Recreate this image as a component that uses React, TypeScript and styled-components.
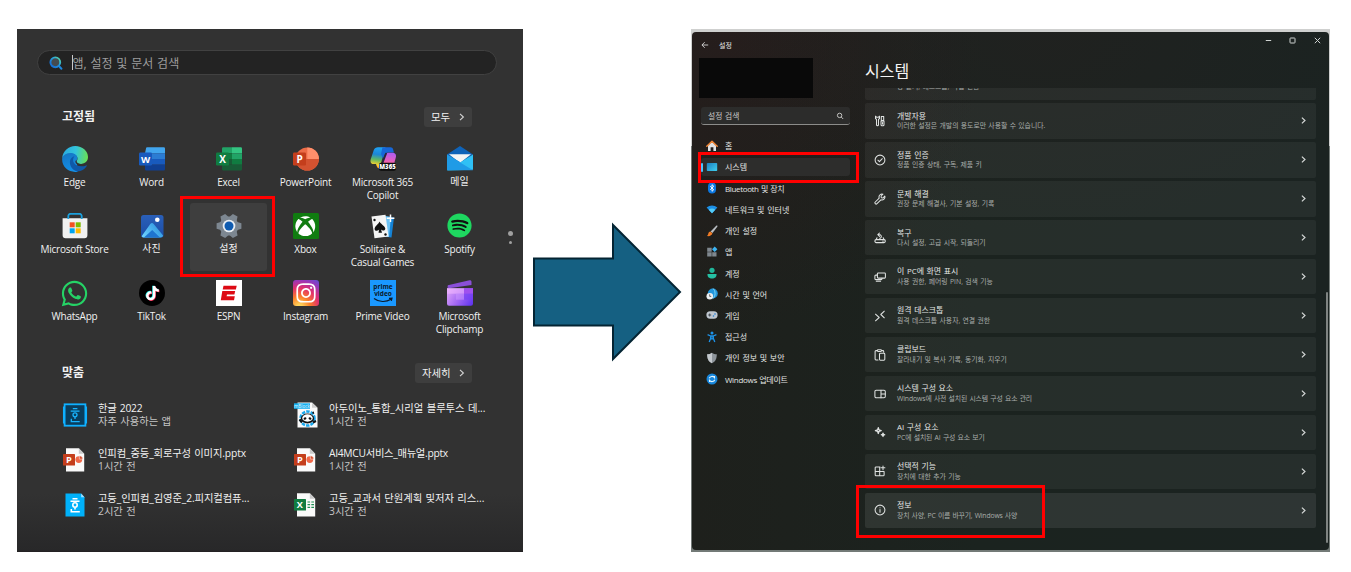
import React from "react";
import styled, { createGlobalStyle, css } from "styled-components";
import { FaWhatsapp, FaXbox, FaTiktok, FaInstagram, FaSpotify } from "react-icons/fa6";

const GlobalStyle = createGlobalStyle`
  * { box-sizing: border-box; }
  body { margin: 0; background: #fff; }
`;

const Page = styled.div`
  width: 1351px;
  height: 572px;
  padding: 29px 0 0 17px;
  display: flex;
  align-items: flex-start;
  overflow: hidden;
  background: #fff;
  font-family: "Open Sans", "Noto Sans CJK KR", sans-serif;
  white-space: nowrap;
`;

const RedFrame = styled.div<{ $inset: string }>`
  position: absolute;
  inset: ${(p) => p.$inset};
  border: 3px solid #ff0000;
  pointer-events: none;
  z-index: 2;
`;

/* ---------- start menu ---------- */

const StartMenu = styled.section`
  width: 506px;
  height: 523px;
  padding: 21px 20px 0;
  background: linear-gradient(#323232 0, #323232 465px, #282829 521px, #221f21 523px);
  color: #f1f1f1;
  display: flex;
  flex-direction: column;
  position: relative;
  flex: none;
`;

const StartSearch = styled.div`
  height: 25px;
  width: 460px;
  border: 1px solid #414141;
  border-radius: 13px;
  background: #232323;
  display: flex;
  align-items: center;
  padding-left: 10.5px;
  flex: none;
`;

const Caret = styled.span`
  width: 1px;
  height: 15px;
  margin-left: 9px;
  background: #c9c9c9;
`;

const Placeholder = styled.span`
  font-size: 12px;
  color: #9d9d9d;
  word-spacing: 0.7px;
`;

const SectionHead = styled.div<{ $top: number }>`
  margin: ${(p) => p.$top}px 31px 0 25px;
  height: 20px;
  display: flex;
  align-items: center;
  justify-content: space-between;
  flex: none;
`;

const SectionTitle = styled.h2`
  margin: 0;
  font-size: 12px;
  font-weight: 600;
  line-height: 18px;
`;

const MoreButton = styled.button<{ $w: number }>`
  width: ${(p) => p.$w}px;
  height: 20px;
  border: 0;
  border-radius: 3px;
  background: #3e3e3e;
  color: #f1f1f1;
  font: 400 10.4px/18px "Noto Sans CJK KR", sans-serif;
  padding: 0 7px;
  display: flex;
  align-items: center;
  justify-content: space-between;
`;

const AppGrid = styled.div`
  margin: 9px 0 0 -1px;
  width: 462px;
  display: grid;
  grid-template-columns: repeat(6, 1fr);
  grid-auto-rows: 67.4px;
  flex: none;
`;

const AppTile = styled.div<{ $active?: boolean }>`
  position: relative;
  display: flex;
  flex-direction: column;
  align-items: center;
  padding-top: 9.5px;
  border-radius: 3px;
  ${(p) => p.$active && css`background: #3e3e3e;`}
`;

const AppLabel = styled.span<{ $latin: boolean }>`
  margin-top: ${(p) => (p.$latin ? 4 : 3.5)}px;
  font-size: 10px;
  letter-spacing: ${(p) => (p.$latin ? -0.22 : 0)}px;
  line-height: 13px;
  text-align: center;
  white-space: pre;
`;

const PagerDots = styled.div`
  position: absolute;
  left: 491px;
  top: 202px;
  display: flex;
  flex-direction: column;
  align-items: center;
  gap: 5px;
  width: 5px;
`;

const Dot = styled.i<{ $s: number }>`
  width: ${(p) => p.$s}px;
  height: ${(p) => p.$s}px;
  border-radius: 50%;
  background: #a0a0a0;
`;

const RecGrid = styled.div`
  margin: 9.5px 0 0 25px;
  display: grid;
  grid-template-columns: 231px 190px;
  grid-auto-rows: 44.8px;
`;

const RecItem = styled.div`
  display: flex;
  align-items: center;
  gap: 10px;

  > svg {
    flex: none;
  }
`;

const RecText = styled.div`
  display: flex;
  flex-direction: column;
  font-size: 10.3px;
  line-height: 12.6px;
  word-spacing: 0.7px;
`;

const RecSub = styled.span`
  color: #c4c4c4;
`;

const RecTitle = styled.span<{ $tracking: number }>`
  letter-spacing: ${(p) => p.$tracking}px;
`;

/* ---------- arrow ---------- */

const ArrowWrap = styled.div`
  margin: 192px 0 0 9px;
  width: 151px;
  height: 142px;
  flex: none;
`;

/* ---------- settings ---------- */

const SettingsShot = styled.section`
  margin-left: 8px;
  width: 639px;
  height: 523px;
  padding: 3px 1px 2px 1px;
  background: linear-gradient(#cfd0cf, #cfd0cf) 0 0 / 100% 117px no-repeat, #737a77;
  flex: none;
`;

const SettingsWindow = styled.div`
  position: relative;
  height: 518px;
  border-radius: 4px;
  overflow: hidden;
  color: #e4e6e5;
  display: flex;
  flex-direction: column;
  background:
    radial-gradient(ellipse 330px 200px at 55% 0, rgba(36, 32, 32, 0.55), transparent),
    radial-gradient(ellipse 260px 300px at 5% 0, rgba(38, 29, 28, 0.95), transparent),
    linear-gradient(90deg, #1e201c, #1b231f 45%, #1b2321);
`;

const TitleBar = styled.header`
  height: 25px;
  padding: 0 8.5px 0 9px;
  display: flex;
  align-items: center;
  font-size: 7px;
  flex: none;
`;

const WindowTitle = styled.span`
  margin-left: 10px;
  flex: 1;
`;

const WindowControls = styled.div`
  display: flex;
  gap: 17.5px;
  margin-top: -9px;
`;

const Body = styled.div`
  display: flex;
  flex: 1;
`;

const Sidebar = styled.nav`
  width: 167px;
  padding: 1px 0 0 7px;
  display: flex;
  flex-direction: column;
  flex: none;
`;

const AccountBlock = styled.div`
  width: 114px;
  height: 40px;
  background: #090909;
`;

const SettingsSearch = styled.div`
  margin: 9px 0 11.7px 2px;
  width: 149px;
  height: 18px;
  border-radius: 3px;
  background: #2c2c2b;
  border-bottom: 1px solid #8c8c8a;
  padding: 0 6px 0 7px;
  display: flex;
  align-items: center;
  justify-content: space-between;
  font-size: 7.8px;
  color: #c8c8c6;
  word-spacing: 0.6px;
`;

const NavItem = styled.div<{ $active?: boolean; $tracking?: number }>`
  position: relative;
  width: 149px;
  height: 18.2px;
  margin: 0 0 3.03px 2px;
  padding-left: 5px;
  border-radius: 3px;
  display: flex;
  align-items: center;
  gap: 7px;
  font-size: 8px;
  word-spacing: 0.6px;
  letter-spacing: ${(p) => p.$tracking || 0}px;
  ${(p) =>
    p.$active &&
    css`
      background: #2d2d2c;
      &::before {
        content: "";
        position: absolute;
        left: 0;
        top: 5px;
        width: 2px;
        height: 9px;
        border-radius: 1px;
        background: #4cc2ff;
      }
    `}
`;

const Main = styled.main`
  width: 458px;
  padding-left: 6px;
  display: flex;
  flex-direction: column;
`;

const MainTitle = styled.h1`
  margin: 2px 0 5px;
  font-size: 16px;
  line-height: 24px;
  font-weight: 400;
  color: #f4f4f4;
`;

const CardList = styled.div`
  width: 451px;
  height: 440px;
  overflow: hidden;
  display: flex;
  flex-direction: column;
  justify-content: flex-end;
  gap: 3.6px;
  flex: none;
`;

const Card = styled.div<{ $hot?: boolean }>`
  height: 35.35px;
  flex: none;
  border-radius: 2px;
  background: ${(p) => (p.$hot ? "rgba(255,255,255,.085)" : "rgba(255,255,255,.05)")};
  padding: 0 10px 0 9px;
  display: flex;
  align-items: center;
`;

const CardText = styled.div`
  margin-left: 11px;
  flex: 1;
  display: flex;
  flex-direction: column;
  word-spacing: 0.6px;
`;

const CardTitle = styled.span`
  min-height: 9.5px;
  font-size: 7.9px;
  line-height: 9.5px;
`;

const CardSub = styled.span<{ $tracking?: number }>`
  font-size: 6.85px;
  line-height: 9px;
  color: #a9adab;
  letter-spacing: ${(p) => p.$tracking || 0}px;
`;

const Scrollbar = styled.div`
  position: absolute;
  right: 1px;
  top: 260px;
  width: 2px;
  height: 251px;
  border-radius: 1px;
  background: #7f8482;
`;

/* ---------- app icons ---------- */

const AppIconBox = styled.div<{ $bg?: string; $round?: string; $fg?: string }>`
  width: 26px;
  height: 26px;
  background: ${(p) => p.$bg || "transparent"};
  border-radius: ${(p) => p.$round || "0"};
  color: ${(p) => p.$fg || "#fff"};
  display: flex;
  align-items: center;
  justify-content: center;
  flex: none;

  > svg {
    flex: none;
  }
`;

const Svg = ({ s = 26, children }: { s?: number; children: React.ReactNode }) => (
  <svg width={s} height={s} viewBox="0 0 26 26" fill="none">{children}</svg>
);

const Letter = ({ x, y, size, children }: { x: number; y: number; size: number; children: string }) => (
  <text x={x} y={y} fontSize={size} fontWeight="700" fill="#fff" textAnchor="middle" fontFamily="Open Sans, sans-serif">{children}</text>
);

const EdgeIcon = () => (
  <Svg>
    <defs>
      <linearGradient id="e1" x1="0" y1="8" x2="26" y2="12" gradientUnits="userSpaceOnUse"><stop stopColor="#2aa9e0" /><stop offset=".5" stopColor="#33c4dc" /><stop offset="1" stopColor="#6be24f" /></linearGradient>
      <linearGradient id="e2" x1="4" y1="8" x2="10" y2="26" gradientUnits="userSpaceOnUse"><stop stopColor="#1577c6" /><stop offset="1" stopColor="#1490e6" /></linearGradient>
    </defs>
    <path d="M.2 12.200C.8 5 6.500 0 13.200 0 20.500 0 26 5 26 11c0 4.300-3.200 6.900-6.800 6.900-3 0-4.700-1.100-4.700-2.100 0-.8 1-1.300 1-3.300 0-3-3.200-4.600-7-4.600-4 0-6.800 1.500-8.300 4.300z" fill="url(#e1)" />
    <path d="M.2 12.200C1.700 8.600 4.800 7 8.500 7c3.300 0 6.700 1.700 6.900 5-.2 1.500-.9 2.200-.9 3.200 0 2 2 8 1 10.500C7.500 27-.7 21.300.2 12.200z" fill="url(#e2)" />
    <path d="M7.900 16.300c0-3.300 2.300-5.500 4.500-6-1.500 2-1.800 4.700-.4 6.800 2.300 3.400 7.700 4.100 12.200 2.300.6-.2.900.2.600.7-2 3.300-5.600 5.400-9.300 5.400-4.200-.7-7.600-4.700-7.600-9.200z" fill="#0f58a8" />
    <path d="M14.500 14.200c-.2 2.400 2 3.700 4.700 3.700 1.500 0 2.900-.4 4-1.200l-1.500 2.500c-4 .8-7.200-.6-8.200-2.700-.4-1-.1-2 1-2.300z" fill="#323232" />
  </Svg>
);

const WordIcon = () => (
  <Svg>
    <path d="M7 2.500a1.200 1.200 0 0 1 1.200-1.200h16.600A1.200 1.200 0 0 1 26 2.500v4.700H6z" fill="#41a5ee" />
    <path d="M6 7.200h20V13H6z" fill="#2b7cd3" /><path d="M6 13h20v5.700H6z" fill="#185abd" />
    <path d="M6 18.700h20v4.600a1.200 1.200 0 0 1-1.200 1.200H7.200A1.200 1.200 0 0 1 6 23.300z" fill="#103f91" />
    <rect y="6.500" width="13" height="13" rx="1.200" fill="#185abd" /><Letter x={6.500} y={16.500} size={9.500}>W</Letter>
  </Svg>
);

const ExcelIcon = () => (
  <Svg>
    <path d="M6 2.500a1.200 1.200 0 0 1 1.200-1.200H16v6H6z" fill="#21a366" /><path d="M16 1.300h8.800A1.200 1.200 0 0 1 26 2.500v4.800H16z" fill="#33c481" />
    <path d="M6 7.300h10V13H6z" fill="#107c41" /><path d="M16 7.300h10V13H16z" fill="#21a366" />
    <path d="M6 13h10v5.700H6z" fill="#185c37" /><path d="M16 13h10v5.700H16z" fill="#107c41" />
    <path d="M6 18.700h20v4.600a1.200 1.200 0 0 1-1.200 1.200H7.200A1.200 1.200 0 0 1 6 23.300z" fill="#185c37" />
    <rect y="6.500" width="13" height="13" rx="1.200" fill="#107c41" /><Letter x={6.500} y={16.500} size={10}>X</Letter>
  </Svg>
);

const PowerPointIcon = () => (
  <Svg>
    <circle cx="14.300" cy="13" r="11.600" fill="#ed6c47" /><path d="M14.300 1.400A11.600 11.600 0 0 1 25.900 13H14.300z" fill="#ff8f6b" />
    <path d="M2.700 13h23.200a11.600 11.600 0 0 1-23.200 0z" fill="#d35230" />
    <rect y="6.500" width="13" height="13" rx="1.200" fill="#c43e1c" /><Letter x={6.600} y={16.500} size={10}>P</Letter>
  </Svg>
);

const CopilotIcon = () => (
  <Svg>
    <defs>
      <linearGradient id="c1" x1="8" y1="1" x2="5" y2="22" gradientUnits="userSpaceOnUse"><stop stopColor="#1fa4f5" /><stop offset=".35" stopColor="#1c86d8" /><stop offset=".6" stopColor="#5fb865" /><stop offset=".85" stopColor="#ffd02a" /><stop offset="1" stopColor="#ff8a3d" /></linearGradient>
      <linearGradient id="c2" x1="20" y1="6" x2="18" y2="20" gradientUnits="userSpaceOnUse"><stop stopColor="#a85cf5" /><stop offset=".6" stopColor="#e55fc0" /><stop offset="1" stopColor="#ff6f7b" /></linearGradient>
    </defs>
    <path d="M8 1.200h7.500L9.800 21.500C8.500 23 7 22 6 18H3.300C.8 18 0 15.800.8 13l3-9C4.600 2.200 6 1.200 8 1.200z" fill="url(#c1)" />
    <path d="M12.500 1.200h8c1.500 0 2.300.7 2.600 2l.8 3.300h-5.700c-2.200 0-3.300 1-4 3.200L13 12.500 11 8z" fill="#1767d8" />
    <path d="M18 6.700h4.700c2.700 0 3.800 2.200 3.100 4.800L24.300 17H12.800l2.500-8c.5-1.500 1.300-2.300 2.700-2.300z" fill="url(#c2)" />
    <path d="m16.300 7-4 10.500" stroke="#2a2440" strokeWidth="1.800" />
    <rect x="9" y="16.700" width="17" height="8" rx="2" fill="#0b0b0b" />
    <text x="17.500" y="23" fontSize="6" fontWeight="800" fill="#fff" textAnchor="middle" fontFamily="Open Sans, sans-serif">M365</text>
  </Svg>
);

const MailIcon = () => (
  <Svg>
    <path d="M0 8.500 13 0l13 8.500L13 17z" fill="#0f63b8" /><path d="M2 8.300h22L13 17z" fill="#f4f4f4" />
    <path d="M0 8.500 13 16 0 24z" fill="#1a8fe0" /><path d="M26 8.500v15.300L0 24.500z" fill="#2fc0f5" /><path d="M0 8.500 26 24.300H0z" fill="#1f9be6" />
  </Svg>
);

const StoreIcon = () => (
  <Svg>
    <path d="M.6 5.200h24.800v17a3 3 0 0 1-3 3H3.600a3 3 0 0 1-3-3z" fill="#f1f1f1" />
    <path d="M6.300 6V2.800A2.300 2.300 0 0 1 8.600.8h8.800a2.300 2.300 0 0 1 2.300 2V6" stroke="#1ca0dc" strokeWidth="1.800" />
    <path d="M7.700 9.300h5v5h-5z" fill="#f25022" /><path d="M13.700 9.300h5v5h-5z" fill="#7fba00" /><path d="M7.700 15.300h5v5h-5z" fill="#00a4ef" /><path d="M13.700 15.300h5v5h-5z" fill="#ffb900" />
  </Svg>
);

const PhotosIcon = () => (
  <Svg>
    <defs>
      <linearGradient id="ph" x1="0" y1="2" x2="0" y2="24" gradientUnits="userSpaceOnUse"><stop stopColor="#2a5fb8" /><stop offset="1" stopColor="#1b4ea8" /></linearGradient>
      <linearGradient id="ph2" x1="4" y1="24" x2="20" y2="12" gradientUnits="userSpaceOnUse"><stop stopColor="#6fd3ff" /><stop offset="1" stopColor="#2f96e0" /></linearGradient>
    </defs>
    <rect x="2" y="2" width="22.500" height="22.500" rx="2.500" fill="url(#ph)" />
    <path d="M2.600 23.200 11.300 11c1-1.300 2.400-1.300 3.400 0l9.400 11.500c-.3 1.300-1.200 2-2.400 2H5c-1.200 0-1.900-.5-2.400-1.300z" fill="url(#ph2)" />
    <path d="M5 24.500 13.200 17 21 24.500z" fill="#1e74cf" />
    <circle cx="18.300" cy="6.800" r="2.300" fill="#fff" />
  </Svg>
);

const GearIcon = () => (
  <Svg>
    <g fill="#7d8791">
      {[0, 60, 120].map((a) => (
        <path key={a} d="M10.300.6h5.400l1.600 4.900v15l-1.600 4.900h-5.400l-1.600-4.900v-15z" transform={`rotate(${a + 30} 13 13)`} />
      ))}
      <circle cx="13" cy="13" r="9.500" />
    </g>
    <circle cx="13" cy="13" r="6.300" fill="#e9eef3" /><circle cx="13" cy="13" r="4.500" fill="#0f5bb0" />
  </Svg>
);

const SolitaireIcon = () => (
  <Svg>
    <path d="m14 3 10 1.500-2.500 20L11 23z" fill="#1583d6" /><path d="M12 2.500 21 4l-2 20-9-1z" fill="#6ec3f5" />
    <path d="M1.500 3.500 15.500 1.800 18.500 23.500 4.500 25.300z" fill="#f5f5f5" />
    <path d="M9.500 8.500c1 2.500 5.300 4.200 5.800 7 .2 2-2.600 2.800-4.300 1.100l1 3.200H8.500l.7-3.200c-1.500 1.900-4.600 1.400-4.600-.7.100-2.800 3.900-4.700 4.900-7.400z" fill="#111" />
    <circle cx="4.500" cy="7" r="1.200" fill="#111" /><circle cx="15.500" cy="21.500" r="1.200" fill="#111" />
    <path d="M20.500 1.500v7.500M16.700 5.200h7.700" stroke="#fff" strokeWidth="1.500" />
  </Svg>
);

const TikTokIcon = () => (
  <AppIconBox $bg="#000" $round="50%">
    <svg width="26" height="26" viewBox="0 0 26 26">
      <g transform="translate(5.600 5.400)"><FaTiktok size={14.500} color="#25f4ee" /></g>
      <g transform="translate(6.800 6.400)"><FaTiktok size={14.500} color="#fe2c55" /></g>
      <g transform="translate(6.200 5.900)"><FaTiktok size={14.500} color="#fff" /></g>
    </svg>
  </AppIconBox>
);

const EspnIcon = () => (
  <Svg>
    <path d="M0 0h26v26H0z" fill="#fff" />
    <path d="M7.500 5.800h13.200l-.8 3.700H6.700zM6.300 11h12.900l-.8 3.600h-7.400l-.4 1.700h8.200l-.8 4H4.800z" fill="#dd0a14" />
  </Svg>
);

const PrimeIcon = () => (
  <Svg>
    <path d="M0 0h26v26H0z" fill="#1a98ff" />
    <g fill="#0b1a2b" fontFamily="Open Sans, sans-serif" fontWeight="700" fontSize="6.500" textAnchor="middle"><text x="13" y="8.800">prime</text><text x="13" y="16">video</text></g>
    <path d="M4 18.500c5 3.800 12 3.900 17 .8M19 18.300l3-.2-.7 2.800" stroke="#0b1a2b" strokeWidth="1.200" />
  </Svg>
);

const ClipchampIcon = () => (
  <Svg>
    <defs><linearGradient id="cc" x1="0" y1="9" x2="26" y2="26" gradientUnits="userSpaceOnUse"><stop stopColor="#e3a8fa" /><stop offset=".5" stopColor="#a267f3" /><stop offset="1" stopColor="#5a2ff0" /></linearGradient></defs>
    <path d="M.8 5.200 22.500.3c1.200-.2 2 .4 2 1.500V5L2 8.300.5 7.500z" fill="#8a4fd8" />
    <path d="M0 8.200h26v15.600a2 2 0 0 1-2 2H2a2 2 0 0 1-2-2z" fill="url(#cc)" />
    <path d="M0 8.200h17v5.500H0z" fill="#f0b6ff" opacity=".6" /><path d="M17 8.200h9v5.500h-9z" fill="#a050ee" /><path d="M9 13.700h8v6H9z" fill="#cf9aff" opacity=".5" /><path d="M17 13.700h9v6h-9z" fill="#7740f5" opacity=".6" />
  </Svg>
);

const START_SEARCH_ICON = (
  <svg width="14" height="14" viewBox="0 0 14 14" fill="none">
    <defs><linearGradient id="sg" x1="11" y1="1.500" x2="3" y2="9" gradientUnits="userSpaceOnUse"><stop stopColor="#5fe0a0" /><stop offset=".45" stopColor="#2aa4d8" /><stop offset="1" stopColor="#1673d8" /></linearGradient></defs>
    <circle cx="6.300" cy="6.300" r="4.900" stroke="url(#sg)" strokeWidth="1.900" fill="#444b50" />
    <path d="m9.700 9.800 2.700 2.900" stroke="#1e86dd" strokeWidth="2" strokeLinecap="round" />
  </svg>
);

const Chevron = ({ s = 10, c = "#d5d5d5", w = 1.1 }: { s?: number; c?: string; w?: number }) => (
  <svg width={s * 0.6} height={s} viewBox="0 0 6 10" fill="none"><path d="m1 1.800 3.400 3.200L1 8.200" stroke={c} strokeWidth={w} /></svg>
);

type App = { label: string; icon: React.ReactNode; active?: boolean };
const apps: App[] = [
  { label: "Edge", icon: <EdgeIcon /> },
  { label: "Word", icon: <WordIcon /> },
  { label: "Excel", icon: <ExcelIcon /> },
  { label: "PowerPoint", icon: <PowerPointIcon /> },
  { label: "Microsoft 365\nCopilot", icon: <CopilotIcon /> },
  { label: "메일", icon: <MailIcon /> },
  { label: "Microsoft Store", icon: <StoreIcon /> },
  { label: "사진", icon: <PhotosIcon /> },
  { label: "설정", icon: <GearIcon />, active: true },
  { label: "Xbox", icon: <AppIconBox $bg="#107c10" $round="1.5px"><FaXbox size={20.500} /></AppIconBox> },
  { label: "Solitaire &\nCasual Games", icon: <SolitaireIcon /> },
  { label: "Spotify", icon: <AppIconBox $bg="radial-gradient(#111 60%, transparent 62%)" $fg="#1ed760"><FaSpotify size={25} /></AppIconBox> },
  { label: "WhatsApp", icon: <AppIconBox $fg="#25d366"><FaWhatsapp size={29} /></AppIconBox> },
  { label: "TikTok", icon: <TikTokIcon /> },
  { label: "ESPN", icon: <EspnIcon /> },
  { label: "Instagram", icon: <AppIconBox $round="3px" $bg="radial-gradient(circle at 25% 105%, #ffd35a 8%, #fa7e2a 32%, #e1306c 58%, #9b36b7 80%, #5b4fd8 100%)"><FaInstagram size={22} /></AppIconBox> },
  { label: "Prime Video", icon: <PrimeIcon /> },
  { label: "Microsoft\nClipchamp", icon: <ClipchampIcon /> },
];

/* ---------- document icons ---------- */

const HwpMark = () => (
  <g stroke="#fff" strokeWidth="1.600"><path d="M10.500 6.800h5M8.500 9.300h9M9.300 17v2.700h8.500M13 16v1.500" /><circle cx="13" cy="13" r="2.200" /></g>
);

const HangulAppIcon = () => (
  <Svg>
    <rect x="2.600" y="2.300" width="20.800" height="21.400" fill="#0a3d5c" stroke="#0fb0ff" strokeWidth="1.800" />
    <path d="M1.600 4.500v17M24.400 4.500v17" stroke="#0fb0ff" strokeWidth="1.300" />
    <g stroke="#19b5ff" strokeWidth="1.300"><path d="M10.800 6.700h4.600M8.700 9.200h8.800M9.300 16.800v2.800h8.400M13 15v2" /><circle cx="13" cy="12.800" r="2" /></g>
  </Svg>
);

const HwpDocIcon = () => (
  <Svg><path d="M3.500 1.500h15.700l3.300 3.700v19.300h-19z" fill="#00b1fa" /><path d="M19.200 1.500v3.700h3.300z" fill="#a7e2ff" /><HwpMark /></Svg>
);

const OfficeDocIcon = ({ letter, color }: { letter: string; color: string }) => (
  <Svg>
    <path d="M4 1.300h12.800l5.400 5.400v17.900H4z" fill="#fafafa" /><path d="M16.800 1.300v5.400h5.400z" fill="#c9c9c9" />
    {letter === "P" ? (
      <><circle cx="16.800" cy="12.600" r="3.400" fill="#f0694a" /><path d="M17.400 8.700a3.500 3.500 0 0 1 3.400 3.400h-3.400z" fill="#d9502f" stroke="#fafafa" strokeWidth=".5" /></>
    ) : (
      <path d="M14.500 10h2.600M14.500 12.700h2.600M14.500 15.400h2.600M18.300 10h2.700M18.300 12.700h2.700M18.300 15.400h2.700" stroke="#1f8f55" strokeWidth="1.200" />
    )}
    <rect x="1" y="7" width="12" height="11.500" rx=".6" fill={color} /><Letter x={6.900} y={16} size={9.200}>{letter}</Letter>
  </Svg>
);

const MBlockIcon = () => (
  <Svg>
    <path d="M4.500.5h14.500l5.500 5.200v19.800h-20z" fill="#fafafa" /><path d="M19 .5v5.200h5.500z" fill="#cfcfcf" />
    <path d="M1 1.300h16v5.500H1z" fill="#18b0f0" /><text x="9" y="5.900" fontSize="4.600" fill="#e5f7ff" textAnchor="middle" fontFamily="Open Sans, sans-serif">mBlock</text>
    <circle cx="14.500" cy="16.500" r="7" stroke="#19a8ee" strokeWidth="2.600" strokeDasharray="3.400 1.100" />
    <ellipse cx="14.500" cy="16.500" rx="6.600" ry="5" fill="#111" /><ellipse cx="14.500" cy="16" rx="5.300" ry="3.700" fill="#fff" />
    <ellipse cx="12" cy="16.500" rx="1.500" ry="1.200" fill="#111" transform="rotate(-30 12 16.500)" /><ellipse cx="17" cy="16.500" rx="1.500" ry="1.200" fill="#111" transform="rotate(30 17 16.500)" />
    <path d="m6.500 17.500 2.500 3M20 20.500l3-1.500M19.500 11l1.500-.5" stroke="#111" strokeWidth="2" />
  </Svg>
);

const recs = [
  { title: "한글 2022", sub: "자주 사용하는 앱", icon: <HangulAppIcon />, tracking: -0.2 },
  { title: "아두이노_통합_시리얼 블루투스 데...", sub: "1시간 전", icon: <MBlockIcon />, tracking: 0 },
  { title: "인피컴_중등_회로구성 이미지.pptx", sub: "1시간 전", icon: <OfficeDocIcon letter="P" color="#c43e1c" />, tracking: -0.12 },
  { title: "AI4MCU서비스_매뉴얼.pptx", sub: "1시간 전", icon: <OfficeDocIcon letter="P" color="#c43e1c" />, tracking: -0.3 },
  { title: "고등_인피컴_김영준_2.피지컬컴퓨...", sub: "2시간 전", icon: <HwpDocIcon />, tracking: -0.1 },
  { title: "고등_교과서 단원계획 및저자 리스...", sub: "3시간 전", icon: <OfficeDocIcon letter="X" color="#107c41" />, tracking: 0 },
];

/* ---------- settings icons ---------- */

const NavSvg = ({ children }: { children: React.ReactNode }) => (
  <svg width="12" height="12" viewBox="0 0 12 12" fill="none">{children}</svg>
);

const navItems = [
  { label: "홈", icon: <NavSvg><path d="M2 5.500 6 1.800l4 3.700V11H7.400V7.300H4.600V11H2z" fill="#dfe1e3" /><path d="M.8 6.200 6 1.200l5.200 5" stroke="#ef8433" strokeWidth="1.500" strokeLinecap="round" strokeLinejoin="round" /></NavSvg> },
  { label: "시스템", active: true, icon: <NavSvg><defs><linearGradient id="sy" x2="1" y2="1"><stop stopColor="#1c7fc0" /><stop offset="1" stopColor="#3fd0f0" /></linearGradient></defs><rect x=".8" y="2" width="10.400" height="8" rx=".8" fill="url(#sy)" /></NavSvg> },
  { label: "Bluetooth 및 장치", tracking: -0.35, icon: <NavSvg><rect x="2" y=".5" width="8" height="11" rx="4" fill="#0b78e3" /><path d="m4.200 4.200 3.600 3.500L6 9.300V2.700l1.800 1.600-3.600 3.500" stroke="#fff" strokeWidth=".9" /></NavSvg> },
  { label: "네트워크 및 인터넷", icon: <NavSvg><path d="M.6 4.500C3.700 1.700 8.300 1.700 11.400 4.500L6 10.300z" fill="#1c8fe6" /><path d="M2.700 6.700c2-1.700 4.600-1.700 6.600 0L6 10.300z" fill="#53cbf7" /></NavSvg> },
  { label: "개인 설정", icon: <NavSvg><path d="M10.200.7c.9-.5 1.600.2 1.100 1L6.500 8 4.600 6.400z" fill="#b9bec2" /><path d="M4.300 6.500 6.400 8.300C6 10.500 3.500 11.600.7 11c1.500-.6 1.300-1.600 1.700-2.700.3-1 1.100-1.700 1.900-1.800z" fill="#f07b25" /></NavSvg> },
  { label: "앱", icon: <NavSvg><path d="M1.200 1.700h4.500v4.100H1.200zM1.200 6.300h4.500v4.200H1.200zM6.200 6.300h4.300v4.200H6.200z" fill="#7f878e" /><path d="m8.700.6 2.700 2.700-2.700 2.700L6 3.300z" fill="#3bb3f2" /></NavSvg> },
  { label: "계정", icon: <NavSvg><circle cx="6" cy="3.300" r="2.600" fill="#20b79a" /><path d="M1.500 7h9c.3 3-1.700 4.500-4.500 4.500S1.200 10 1.500 7z" fill="#25c1a4" /></NavSvg> },
  { label: "시간 및 언어", icon: <NavSvg><circle cx="6.800" cy="5.500" r="5" fill="#2196dc" /><path d="M6.800.5c3 1.500 3 8.500 0 10" stroke="#7cd5f7" strokeWidth="1" /><circle cx="3.800" cy="8.200" r="3.300" fill="#eceff1" /><path d="M3.700 6.300v2.100h1.500" stroke="#444" strokeWidth=".8" /></NavSvg> },
  { label: "게임", icon: <NavSvg><rect x=".4" y="2.300" width="11.200" height="7.400" rx="3.700" fill="#bfc7cf" /><path d="M3.700 4.500v3M2.200 6h3" stroke="#3b4248" strokeWidth=".9" /><circle cx="7.500" cy="7" r=".8" fill="#1b7ed8" /><circle cx="9" cy="5" r=".8" fill="#1b7ed8" /></NavSvg> },
  { label: "접근성", icon: <NavSvg><circle cx="6" cy="2" r="1.500" fill="#1d93ea" /><path d="M1.600 3.600 4.700 5v2.300L3.200 11M10.400 3.600 7.300 5v2.300L8.800 11M5 5h2v2.800H5z" stroke="#1d93ea" strokeWidth="1.300" strokeLinejoin="round" /></NavSvg> },
  { label: "개인 정보 및 보안", icon: <NavSvg><path d="M6 .8c1.400 1 3 1.500 4.800 1.500 0 4.500-1.300 7.400-4.800 9C2.500 9.700 1.200 6.800 1.200 2.300 3 2.300 4.600 1.800 6 .8z" fill="#8e959b" /><path d="M6 .8v10.500C2.500 9.700 1.200 6.800 1.200 2.300 3 2.300 4.600 1.800 6 .8z" fill="#c3c8cc" /></NavSvg> },
  { label: "Windows 업데이트", tracking: -0.3, icon: <NavSvg><circle cx="6" cy="6" r="5.500" fill="#1887dc" /><path d="M3.200 5.200C4 3.200 7 2.700 8.500 4.600V3M8.800 6.800C8 8.800 5 9.300 3.500 7.400V9" stroke="#e6f6ff" strokeWidth="1.100" /></NavSvg> },
];

const LineIcon = ({ children }: { children: React.ReactNode }) => (
  <svg width="12" height="12" viewBox="0 0 12 12" fill="none" stroke="#dfe2e1" strokeWidth="1.05" strokeLinecap="round" strokeLinejoin="round">{children}</svg>
);

const cards = [
  { title: "", sub: "창 끌기, 데스크톱, 작업 전환", icon: null },
  { title: "개발자용", sub: "이러한 설정은 개발의 용도로만 사용할 수 있습니다.", icon: <LineIcon><path d="M1.500 1.200v2.300l1 .8v5.500a1 1 0 0 0 2 0V4.300l1-.8V1.200M1.500 1.200l1 1h2l1-1M7.300 1.500h2.400v4H7.300zM7 6h3v3.800a1 1 0 0 1-1 1H8a1 1 0 0 1-1-1zM8.500 7.500v1.500" /></LineIcon> },
  { title: "정품 인증", sub: "정품 인증 상태, 구독, 제품 키", icon: <LineIcon><circle cx="6" cy="6" r="4.900" /><path d="m3.900 6.200 1.500 1.500L8.300 4.700" /></LineIcon> },
  { title: "문제 해결", sub: "권장 문제 해결사, 기본 설정, 기록", icon: <LineIcon><path d="M8.900 1.200a3 3 0 0 0-3.700 3.900L1.300 9a1.200 1.200 0 0 0 1.700 1.700l3.900-3.900a3 3 0 0 0 3.900-3.700L9 4.900 7.300 4.700 7.100 3z" /></LineIcon> },
  { title: "복구", sub: "다시 설정, 고급 시작, 되돌리기", icon: <LineIcon><rect x=".9" y="7.600" width="10.400" height="3" rx="1.300" /><path d="M2.200 7.400 3 5.800M10 7.400 9.200 5.800M8.800 9.100h.4M5.500 1 3.800 2.700l1.700 1.700M3.900 2.700h2.300a2 2 0 0 1 0 3.600H5.600" /></LineIcon> },
  { title: "이 PC에 화면 표시", sub: "사용 권한, 페어링 PIN, 검색 기능", icon: <LineIcon><rect x="3.400" y="1.900" width="8" height="5.200" rx=".8" /><path d="M3.300 4.100H1.700a.8.800 0 0 0-.8.800v2.900a.8.800 0 0 0 .8.800h5.500a.8.800 0 0 0 .8-.8V7.300M2.300 10.300h4.300" /></LineIcon> },
  { title: "원격 데스크톱", sub: "원격 데스크톱 사용자, 연결 권한", icon: <LineIcon><path d="m1.500 4.200 3.700 3.300-3.700 3.300M10.300 1.200 6.800 4.500l3.500 3.300" /></LineIcon> },
  { title: "클립보드", sub: "잘라내기 및 복사 기록, 동기화, 지우기", icon: <LineIcon><path d="M4 11H2a.9.900 0 0 1-.9-.9V2.500a.9.900 0 0 1 .9-.9h1.300M7.500 1.600h1.300a.9.900 0 0 1 .9.900v.7" /><rect x="3.300" y=".7" width="4.200" height="1.700" rx=".8" /><rect x="5.500" y="4.300" width="5.300" height="6.900" rx=".9" /></LineIcon> },
  { title: "시스템 구성 요소", sub: "Windows에 사전 설치된 시스템 구성 요소 관리", tracking: -0.1, icon: <LineIcon><rect x=".9" y="2.300" width="10.400" height="7.500" rx="1.300" /><path d="M7 2.300v7.500M7 6h4.300" /></LineIcon> },
  { title: "AI 구성 요소", sub: "PC에 설치된 AI 구성 요소 보기", tracking: -0.1, icon: <LineIcon><path d="M4.300 1.700 5 3.900 7.200 4.600 5 5.300 4.300 7.500 3.600 5.300 1.400 4.600 3.600 3.900z" strokeWidth="1.300" /><path d="m9 7 .5 1.300 1.300.5-1.300.5L9 10.600l-.5-1.300L7.200 8.800l1.300-.5z" fill="#dfe2e1" /></LineIcon> },
  { title: "선택적 기능", sub: "장치에 대한 추가 기능", icon: <LineIcon><path d="M6 2H2a.8.800 0 0 0-.8.800V10a.8.800 0 0 0 .8.800h7.300a.8.800 0 0 0 .8-.8V6.400H1.200M5.700 2v8.800M9 .9v3.800M7.100 2.800h3.800" /></LineIcon> },
  { title: "정보", sub: "장치 사양, PC 이름 바꾸기, Windows 사양", tracking: -0.16, hot: true, icon: <LineIcon><circle cx="6" cy="6" r="4.900" /><path d="M6 5.500v2.800M6 3.700v.1" /></LineIcon> },
];

const CardIconSlot = styled.div`
  width: 12px;
  height: 12px;
  display: flex;
`;

export default function App() {
  return (
    <>
      <GlobalStyle />
      <Page>
        <StartMenu>
          <StartSearch>
            {START_SEARCH_ICON}
            <Caret />
            <Placeholder>앱, 설정 및 문서 검색</Placeholder>
          </StartSearch>
          <SectionHead $top={32}>
            <SectionTitle>고정됨</SectionTitle>
            <MoreButton $w={48}>모두<Chevron /></MoreButton>
          </SectionHead>
          <AppGrid>
            {apps.map((a) => (
              <AppTile key={a.label} $active={a.active}>
                {a.icon}
                <AppLabel $latin={/[a-z]/i.test(a.label)}>{a.label}</AppLabel>
                {a.active && <RedFrame $inset="-7px -8px -6px -10px" />}
              </AppTile>
            ))}
          </AppGrid>
          <PagerDots><Dot $s={5} /><Dot $s={3} /></PagerDots>
          <SectionHead $top={25}>
            <SectionTitle>맞춤</SectionTitle>
            <MoreButton $w={57}>자세히<Chevron /></MoreButton>
          </SectionHead>
          <RecGrid>
            {recs.map((r) => (
              <RecItem key={r.title}>
                {r.icon}
                <RecText>
                  <RecTitle $tracking={r.tracking}>{r.title}</RecTitle>
                  <RecSub>{r.sub}</RecSub>
                </RecText>
              </RecItem>
            ))}
          </RecGrid>
        </StartMenu>

        <ArrowWrap>
          <svg width="151" height="142" viewBox="0 0 151 142">
            <path d="M2 37.500h79V4l67 67-67 67v-33.500H2z" fill="#156082" stroke="#042433" strokeWidth="2" />
          </svg>
        </ArrowWrap>

        <SettingsShot>
          <SettingsWindow>
            <TitleBar>
              <svg width="8" height="8" viewBox="0 0 8 8" fill="none" stroke="#d6d6d6" strokeWidth=".9"><path d="M7.200 4H1M3.700 1.200.9 4l2.800 2.800" /></svg>
              <WindowTitle>설정</WindowTitle>
              <WindowControls>
                <svg width="7" height="7" viewBox="0 0 7 7" stroke="#cfd3d2" fill="none"><path d="M.8 3.500h5.400" /></svg>
                <svg width="7" height="7" viewBox="0 0 7 7" stroke="#cfd3d2" fill="none"><rect x="1" y="1" width="5" height="5" rx=".6" /></svg>
                <svg width="7" height="7" viewBox="0 0 7 7" stroke="#cfd3d2" fill="none"><path d="m.8.8 5.400 5.400M6.200.8.8 6.200" /></svg>
              </WindowControls>
            </TitleBar>
            <Body>
              <Sidebar>
                <AccountBlock />
                <SettingsSearch>
                  설정 검색
                  <svg width="8" height="8" viewBox="0 0 8 8" fill="none" stroke="#d0d0ce" strokeWidth=".9"><circle cx="3.600" cy="3.400" r="2.200" /><path d="m5.200 5 2 2" /></svg>
                </SettingsSearch>
                {navItems.map((n) => (
                  <NavItem key={n.label} $active={n.active} $tracking={n.tracking}>
                    {n.icon}
                    {n.label}
                    {n.active && <RedFrame $inset="-6px -9px -7px -3px" />}
                  </NavItem>
                ))}
              </Sidebar>
              <Main>
                <MainTitle>시스템</MainTitle>
                <CardList>
                  {cards.map((c) => (
                    <Card key={c.sub} $hot={c.hot}>
                      <CardIconSlot>{c.icon}</CardIconSlot>
                      <CardText>
                        <CardTitle>{c.title}</CardTitle>
                        <CardSub $tracking={c.tracking}>{c.sub}</CardSub>
                      </CardText>
                      {c.icon && <Chevron s={9} c="#d5d8d7" w={1.35} />}
                    </Card>
                  ))}
                </CardList>
              </Main>
            </Body>
            <Scrollbar />
            <RedFrame $inset="453px 284px 12px 164px" />
          </SettingsWindow>
        </SettingsShot>
      </Page>
    </>
  );
}
